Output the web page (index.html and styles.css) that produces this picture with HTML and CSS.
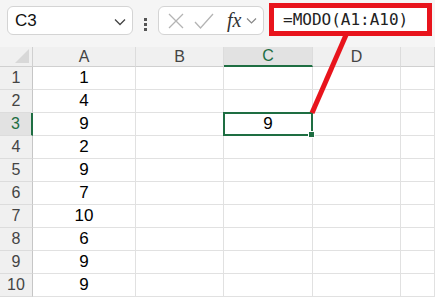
FILE: index.html
```html
<!DOCTYPE html>
<html>

<head>
    <title>MODO</title>
    <link rel="stylesheet" href="styles.css">
</head>

<body>
    <div class="toolbar">
        <div class="namebox">
            <span>C3</span>
            <svg class="chev" width="12" height="8" viewBox="0 0 12 8"><path d="M1 1.5 L6 6.5 L11 1.5" fill="none" stroke="#444" stroke-width="1.3"/></svg>
        </div>
        <div class="dots"><i></i><i></i><i></i></div>
        <div class="fxgroup">
            <svg width="18" height="18" viewBox="0 0 18 18"><path d="M2 2 L16 16 M16 2 L2 16" stroke="#b4b4b4" stroke-width="1.3"/></svg>
            <svg width="20" height="18" viewBox="0 0 20 18"><path d="M1 10 L6.5 16 L19 2" fill="none" stroke="#b4b4b4" stroke-width="1.3"/></svg>
            <span class="fx">fx</span>
            <svg width="11" height="8" viewBox="0 0 11 8"><path d="M1 1.5 L5.5 6 L10 1.5" fill="none" stroke="#888" stroke-width="1.2"/></svg>
        </div>
        <div class="formula">=MODO(A1:A10)</div>
    </div>

    <div class="sheet">
        <div class="corner"><span class="tri"></span></div>
        <div class="colhead">A</div>
        <div class="colhead">B</div>
        <div class="colhead active">C</div>
        <div class="colhead">D</div>
        <div class="colhead"></div>
    </div>

    <svg class="arrow" width="435" height="298"><line x1="346" y1="35" x2="312" y2="113" stroke="#e8141c" stroke-width="5"/></svg>

    <script>
        var values = [1, 4, 9, 2, 9, 7, 10, 6, 9, 9];
        var sheet = document.querySelector('.sheet');
        values.forEach(function (v, i) {
            var row = i + 1;
            var html = '<div class="rowhead' + (row == 3 ? ' active' : '') + '">' + row + '</div>';
            html += '<div class="cell">' + v + '</div>';
            html += '<div class="cell"></div>';
            html += '<div class="cell' + (row == 3 ? ' selected' : '') + '">' + (row == 3 ? '9' : '') + '</div>';
            html += '<div class="cell"></div>';
            html += '<div class="cell"></div>';
            sheet.insertAdjacentHTML('beforeend', html);
        });
    </script>
</body>

</html>
```
FILE: styles.css
```css
body {
    margin: 0;
    background: #ffffff;
    font-family: "Liberation Sans", Arial, sans-serif;
    overflow: hidden;
}

.toolbar {
    display: flex;
    align-items: flex-start;
    height: 47px;
    box-sizing: border-box;
    padding: 3px 2px 0 7px;
    background: #f5f5f5;
}

.namebox {
    display: flex;
    align-items: center;
    justify-content: space-between;
    width: 126px;
    height: 29px;
    margin-top: 3px;
    box-sizing: border-box;
    padding: 0 6px 0 7px;
    background: #fff;
    border: 1px solid #d4d4d4;
    border-radius: 6px;
    font-size: 17px;
    color: #111;
}

.chev {
    margin-top: 2px;
}

.dots {
    display: flex;
    flex-direction: column;
    gap: 2px;
    margin: 15px 11px 0 11px;
}

.dots i {
    width: 3px;
    height: 3px;
    background: #555;
}

.fxgroup {
    display: flex;
    align-items: center;
    width: 106px;
    height: 29px;
    margin-top: 3px;
    box-sizing: border-box;
    padding: 0 4px 0 8px;
    gap: 9px;
    background: #fff;
    border: 1px solid #d4d4d4;
    border-radius: 6px;
}

.fx {
    font-family: "Liberation Serif", serif;
    font-style: italic;
    font-size: 20px;
    color: #333;
    margin-left: 4px;
    margin-right: -4px;
}

.formula {
    width: 163px;
    height: 33px;
    margin-left: 5px;
    box-sizing: border-box;
    border: 5px solid #e8141c;
    background: #fff;
    padding: 1px 0 0 9px;
    font-family: "DejaVu Sans Mono", monospace;
    font-size: 16px;
    line-height: 22px;
    color: #222;
}

.sheet {
    display: grid;
    grid-template-columns: 33px 103px 88px 89px 88px 1fr;
    grid-template-rows: 20px repeat(10, 23px);
}

.corner,
.colhead,
.rowhead {
    background: #f0f0f0;
    box-sizing: border-box;
    color: #444;
}

.corner {
    position: relative;
    border-right: 1px solid #d0d0d0;
    border-bottom: 1px solid #d0d0d0;
}

.tri {
    position: absolute;
    right: 3px;
    bottom: 3px;
    width: 0;
    height: 0;
    border-left: 14px solid transparent;
    border-bottom: 14px solid #d8d8d8;
}

.colhead {
    display: flex;
    align-items: center;
    justify-content: center;
    border-right: 1px solid #dcdcdc;
    border-bottom: 1px solid #d0d0d0;
    font-size: 16px;
}

.colhead.active {
    background: #e2e2e2;
    color: #1e6e42;
    border-bottom: 2px solid #1e6e42;
}

.rowhead {
    display: flex;
    align-items: center;
    justify-content: center;
    border-right: 1px solid #c6c6c6;
    border-bottom: 1px solid #dcdcdc;
    font-size: 16px;
}

.rowhead.active {
    background: #e2e2e2;
    color: #1e6e42;
    border-right: 2px solid #1e6e42;
}

.cell {
    display: flex;
    align-items: center;
    justify-content: center;
    box-sizing: border-box;
    border-right: 1px solid #e1e1e1;
    border-bottom: 1px solid #e1e1e1;
    font-size: 17px;
    color: #000;
}

.cell.selected {
    position: relative;
}

.cell.selected::after {
    content: "";
    position: absolute;
    left: -1px;
    top: -1px;
    right: -1px;
    bottom: -1px;
    border: 2px solid #1e6e42;
}

.cell.selected::before {
    content: "";
    position: absolute;
    right: -3px;
    bottom: -3px;
    width: 5px;
    height: 5px;
    background: #1e6e42;
    border: 1px solid #fff;
    z-index: 1;
}

.arrow {
    position: absolute;
    left: 0;
    top: 0;
    pointer-events: none;
}
```
